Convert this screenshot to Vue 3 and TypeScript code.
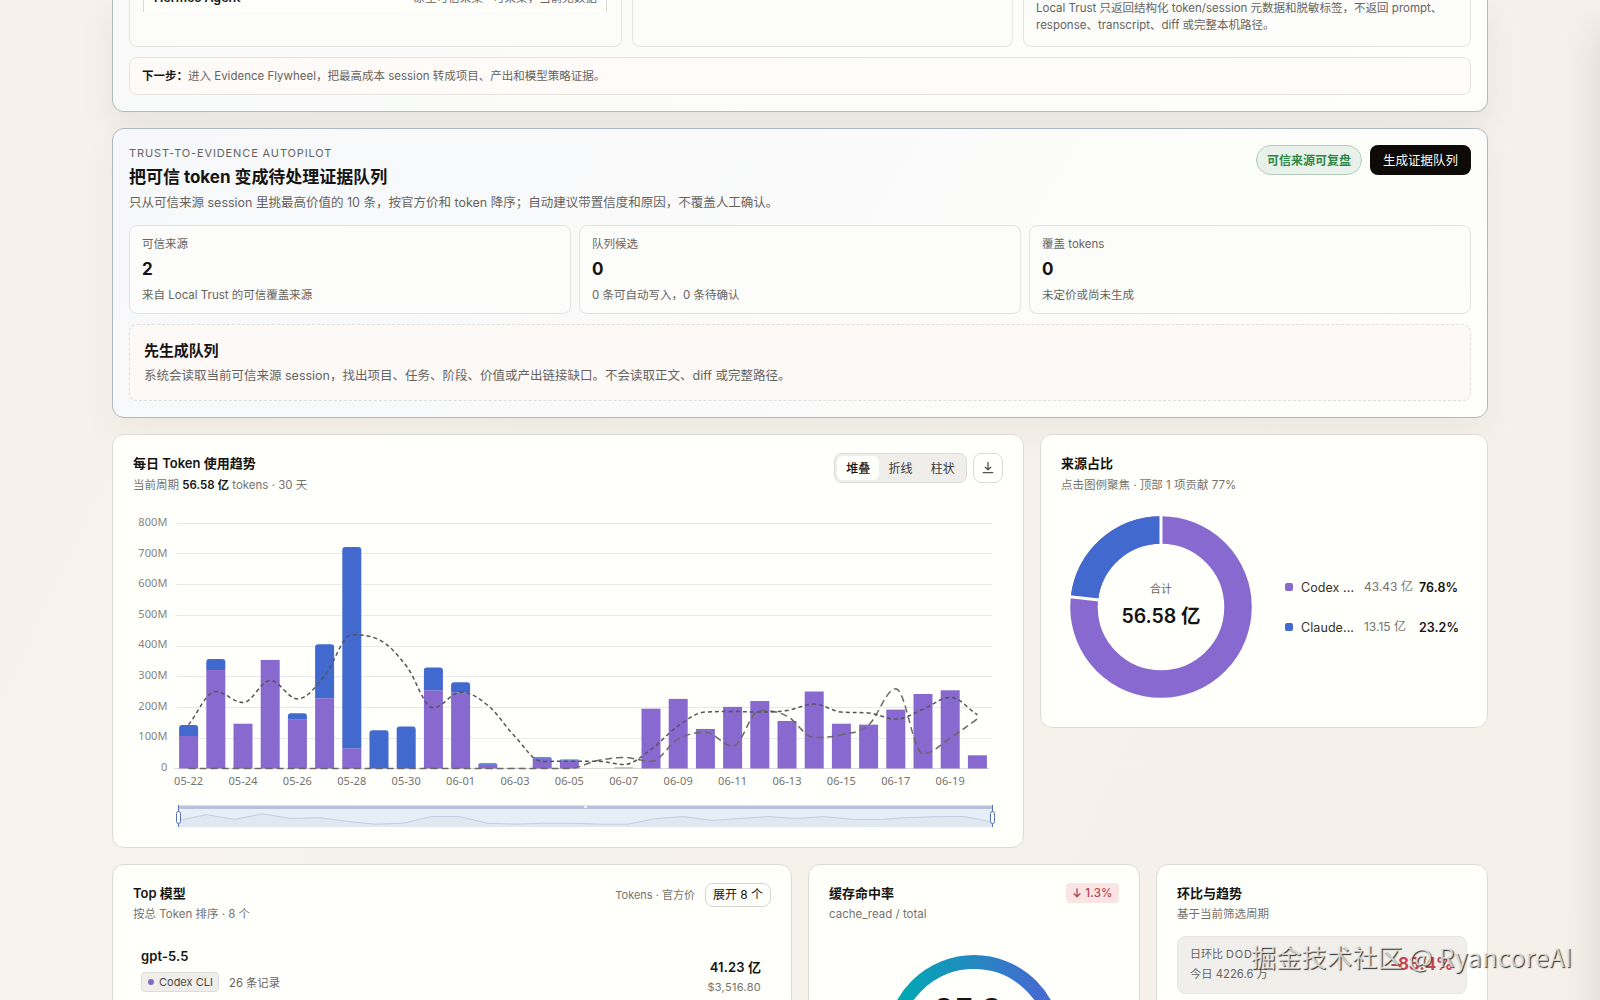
<script setup lang="ts">
interface Bar { codex: number; claude: number }

const X0 = 188.6
const STEP = 27.2
const ZERO = 768.5
const UNIT = 0.3067

const bars: Bar[] = [
  [106, 36], [321, 36], [146, 0], [354, 0], [161, 19], [229, 176], [66, 656], [0, 125],
  [0, 137], [255, 74], [248, 33], [12, 5], [2, 0], [32, 5], [25, 4], [0, 0],
  [4, 0], [195, 0], [227, 0], [129, 0], [201, 0], [220, 0], [155, 0], [251, 0],
  [146, 0], [143, 0], [192, 0], [243, 0], [255, 0], [43, 0],
].map(([codex, claude]) => ({ codex, claude }))

const average = [143, 251, 215, 287, 227, 302, 436, 420, 335, 198, 249, 206, 104, 23, 24, 24, 13, 62, 139, 184, 186, 184, 189, 210, 184, 181, 161, 193, 232, 175]
const previous = [0, 0, 0, 0, 0, 0, 0, 0, 0, 0, 0, 0, 0, 0, 0, 25, 36, 23, 96, 118, 73, 189, 171, 101, 110, 142, 260, 48, 99, 162]
const overview = [12, 6, 11, 5, 10, 9, 13, 16, 15, 8, 8, 15, 16, 15, 15, 16, 16, 10, 8, 12, 10, 8, 10, 8, 11, 11, 9, 8, 8, 14]

const cx = (i: number) => X0 + STEP * i
const cy = (v: number) => ZERO - v * UNIT

function smooth(ys: number[]): string {
  const n = ys.length
  const d = ys.slice(1).map((y, i) => (y - ys[i]) / STEP)
  const m = ys.map((_, i) => {
    if (i === 0) return d[0]
    if (i === n - 1) return d[n - 2]
    if (d[i - 1] * d[i] <= 0) return 0
    const limit = 2.6 * Math.min(Math.abs(d[i - 1]), Math.abs(d[i]))
    const mean = (d[i - 1] + d[i]) / 2
    return Math.sign(mean) * Math.min(Math.abs(mean), limit)
  })
  let path = `M${cx(0)} ${ys[0]}`
  const h = STEP * 0.36
  for (let i = 1; i < n; i++) {
    path += `C${cx(i - 1) + h} ${ys[i - 1] + m[i - 1] * h} ${cx(i) - h} ${ys[i] - m[i] * h} ${cx(i)} ${ys[i]}`
  }
  return path
}

function capPath(i: number, b: Bar): string {
  const x = cx(i) - 9.5
  const top = cy(b.codex + b.claude)
  const bottom = cy(b.codex)
  const r = Math.min(3, bottom - top)
  return `M${x} ${bottom}V${top + r}Q${x} ${top} ${x + r} ${top}H${x + 19 - r}Q${x + 19} ${top} ${x + 19} ${top + r}V${bottom}Z`
}

const averagePath = smooth(average.map(cy))
const previousPath = smooth(previous.map(cy))
const overviewLine = overview.map((v, i) => `${i ? 'L' : 'M'}${178.5 + i * 28.08} ${809 + v * 0.95}`).join('')

const ticks = [800, 700, 600, 500, 400, 300, 200, 100, 0]
const gridLines = [523.5, 553.5, 584.5, 615.5, 646.5, 676.5, 707.5, 738.5]
const days = ['05-22', '05-24', '05-26', '05-28', '05-30', '06-01', '06-03', '06-05', '06-07', '06-09', '06-11', '06-13', '06-15', '06-17', '06-19']

const metrics = [
  { label: '可信来源', value: '2', note: '来自 Local Trust 的可信覆盖来源' },
  { label: '队列候选', value: '0', note: '0 条可自动写入，0 条待确认' },
  { label: '覆盖 tokens', value: '0', note: '未定价或尚未生成' },
]
const legend = [
  { name: 'Codex ...', amount: '43.43 亿', share: '76.8%', kind: 'codex' },
  { name: 'Claude...', amount: '13.15 亿', share: '23.2%', kind: 'claude' },
]

const R = 77
const C = 2 * Math.PI * R
const cutAngle = 0.768 * 2 * Math.PI
const cut = { x: Math.sin(cutAngle), y: -Math.cos(cutAngle) }
</script>

<template>
  <div class="page">
    <main class="stack">
      <section class="card trust">
        <div class="trust-cols">
          <div class="panel sources">
            <div class="source-row"><b>Hermes Agent</b><span>原生可信采集 · 可采集，当前无数据</span></div>
          </div>
          <div class="panel"></div>
          <div class="panel note">
            <p>Local Trust 只返回结构化 token/session 元数据和脱敏标签，不返回 prompt、</p>
            <p>response、transcript、diff 或完整本机路径。</p>
          </div>
        </div>
        <div class="next"><b>下一步：</b><span>进入 Evidence Flywheel，把最高成本 session 转成项目、产出和模型策略证据。</span></div>
      </section>

      <section class="card autopilot">
        <header class="auto-head">
          <div>
            <div class="eyebrow">TRUST-TO-EVIDENCE AUTOPILOT</div>
            <h2>把可信 token 变成待处理证据队列</h2>
            <p class="lead">只从可信来源 session 里挑最高价值的 10 条，按官方价和 token 降序；自动建议带置信度和原因，不覆盖人工确认。</p>
          </div>
          <div class="auto-actions">
            <span class="pill">可信来源可复盘</span>
            <button class="primary">生成证据队列</button>
          </div>
        </header>
        <div class="metrics">
          <div v-for="m in metrics" :key="m.label" class="metric">
            <span class="m-label">{{ m.label }}</span>
            <strong>{{ m.value }}</strong>
            <span class="m-note">{{ m.note }}</span>
          </div>
        </div>
        <div class="empty">
          <h3>先生成队列</h3>
          <p>系统会读取当前可信来源 session，找出项目、任务、阶段、价值或产出链接缺口。不会读取正文、diff 或完整路径。</p>
        </div>
      </section>

      <div class="grid">
        <section class="card plain trend">
          <header class="head">
            <div>
              <h4>每日 Token 使用趋势</h4>
              <p class="sub">当前周期 <b>56.58 亿</b> tokens · 30 天</p>
            </div>
            <div class="tools">
              <div class="seg"><span class="on">堆叠</span><span>折线</span><span>柱状</span></div>
              <button class="dl" aria-label="download">
                <svg width="14" height="14" viewBox="0 0 14 14" fill="none" stroke="#55534e" stroke-width="1.300" stroke-linecap="round" stroke-linejoin="round"><path d="M7 1.500v7.200M4.300 6.200 7 8.900l2.700-2.700M2.300 11.700h9.400" /></svg>
              </button>
            </div>
          </header>
          <svg class="chart" width="870" height="330" viewBox="133 506 870 330">
            <g class="y-axis">
              <text v-for="(t, i) in ticks" :key="t" x="167.500" :y="526 + i * 30.6">{{ t ? t + 'M' : '0' }}</text>
            </g>
            <path v-for="y in gridLines" :key="y" :d="`M176.500 ${y}H992`" stroke="#e9e9ea" />
            <path d="M174.500 768.500H989" stroke="#dadadb" />
            <g v-for="(b, i) in bars" :key="i">
              <rect v-if="b.codex" :x="cx(i) - 9.5" :y="cy(b.codex)" width="19" :height="b.codex * UNIT" :fill="b.codex < 5 ? '#b5b3ae' : '#8769cf'" />
              <path v-if="b.claude" :d="capPath(i, b)" fill="#4169ce" />
            </g>
            <path :d="previousPath" class="line prev" />
            <path :d="averagePath" class="line avg" />
            <g class="x-axis">
              <text v-for="(d, i) in days" :key="d" :x="cx(i * 2)" y="785">{{ d }}</text>
            </g>
            <rect x="178.500" y="809" width="814.500" height="18" fill="#e7eef7" />
            <path :d="overviewLine + 'V827H178.500Z'" fill="#e0e8f1" />
            <path :d="overviewLine" fill="none" stroke="#c6cddd" />
            <rect x="178" y="805.500" width="815" height="3.500" fill="#b9c1da" />
            <path d="M584 807h3" stroke="#fff" stroke-width="1.500" />
            <path d="M178.500 805v22M992.500 805v22" stroke="#5473b5" />
            <rect x="176.500" y="811.500" width="4" height="12" rx="2" fill="#fff" stroke="#5473b5" />
            <rect x="990.500" y="811.500" width="4" height="12" rx="2" fill="#fff" stroke="#5473b5" />
          </svg>
        </section>

        <section class="card plain share">
          <h4>来源占比</h4>
          <p class="sub">点击图例聚焦 · 顶部 1 项贡献 77%</p>
          <div class="share-body">
            <div class="donut">
              <svg width="182" height="182" viewBox="-91 -91 182 182" fill="none">
                <g transform="rotate(-90)">
                  <circle :r="R" stroke="#8769cf" stroke-width="27.500" />
                  <circle :r="R" stroke="#4169ce" stroke-width="27.500" :stroke-dasharray="`${C * 0.232} ${C}`" :stroke-dashoffset="-C * 0.768" />
                </g>
                <path :d="`M0 -60V-92M${cut.x * 60} ${cut.y * 60}L${cut.x * 92} ${cut.y * 92}`" stroke="#fffffc" stroke-width="3" />
              </svg>
              <div class="donut-text"><span>合计</span><strong>56.58 亿</strong></div>
            </div>
            <ul class="legend">
              <li v-for="l in legend" :key="l.name">
                <i :class="l.kind"></i><span class="l-name">{{ l.name }}</span><span class="l-amt">{{ l.amount }}</span><b>{{ l.share }}</b>
              </li>
            </ul>
          </div>
        </section>

        <section class="card plain models">
          <header class="head">
            <div>
              <h4>Top 模型</h4>
              <p class="sub low">按总 Token 排序 · 8 个</p>
            </div>
            <div class="model-tools"><span>Tokens · 官方价</span><button>展开 8 个</button></div>
          </header>
          <div class="model">
            <div>
              <div class="model-name">gpt-5.5</div>
              <div class="model-meta"><span class="tag"><i></i>Codex CLI</span><span>26 条记录</span></div>
            </div>
            <div class="model-num"><b>41.23 亿</b><span>$3,516.80</span></div>
          </div>
        </section>

        <section class="card plain cache">
          <header class="head">
            <div>
              <h4>缓存命中率</h4>
              <p class="sub low">cache_read / total</p>
            </div>
            <span class="drop">
              <svg width="10" height="12" viewBox="0 0 10 12" fill="none" stroke="#b5434f" stroke-width="1.300" stroke-linecap="round" stroke-linejoin="round"><path d="M5 1.800v8M2 6.800 5 9.800l3-3" /></svg>1.3%
            </span>
          </header>
          <div class="gauge">
            <svg width="176" height="176" viewBox="0 0 176 176" fill="none">
              <defs><linearGradient id="ring" x1="0" y1="0" x2="1" y2="0"><stop offset="0.050" stop-color="#00a8b2" /><stop offset="0.900" stop-color="#446bd0" /></linearGradient></defs>
              <circle cx="88" cy="88" r="81" stroke="url(#ring)" stroke-width="14" />
            </svg>
            <div class="gauge-text">95.3<small>%</small></div>
          </div>
        </section>

        <section class="card plain ratio">
          <h4>环比与趋势</h4>
          <p class="sub low">基于当前筛选周期</p>
          <div class="dod">
            <div><div class="dod-label">日环比 <em>DOD</em></div><div class="dod-today">今日 4226.6 万</div></div>
            <strong>-83.4%</strong>
          </div>
        </section>
      </div>
    </main>
    <div class="drawer"></div>
    <div class="watermark">掘金技术社区 @ RyancoreAI</div>
  </div>
</template>

<style>
body { margin: 0; overflow: hidden; }
</style>

<style scoped>
* { box-sizing: border-box; }
.page {
  position: relative;
  width: 1600px;
  height: 1000px;
  overflow: hidden;
  background: linear-gradient(115deg, #f7f1ec 0%, #f5f2eb 50%, #f5f1ea 100%);
  font-family: Inter, "Noto Sans CJK SC", sans-serif;
  color: #151412;
}
h2, h3, h4, p, ul { margin: 0; padding: 0; }
p, h2, h3, h4, span, b, strong, button { white-space: nowrap; }
button { font-family: inherit; padding: 0; }
b { font-weight: 600; }
.stack { width: 1376px; margin: 0 auto; display: flex; flex-direction: column; gap: 16px; }
.card { border: 1px solid #b2bdb8; border-radius: 12px; }
.trust {
  height: 112px;
  border-top: 0;
  border-radius: 0 0 12px 12px;
  padding: 0 16px 16px;
  background: linear-gradient(100deg, #f8faf9, #fcfcfa 50%, #fefefc);
  box-shadow: 0 14px 34px rgba(40, 60, 50, 0.08);
}
.trust-cols { display: grid; grid-template-columns: 493px 381px 1fr; gap: 10px; height: 47px; }
.panel { border: 1px solid #e4e4e0; border-top: 0; border-radius: 0 0 8px 8px; background: #fcfcfa; }
.sources { padding: 0 14px 0 13px; overflow: hidden; }
.source-row {
  display: flex; justify-content: space-between; height: 12px; padding: 0 9px 0 10px;
  border: solid #d9d9d6; border-width: 0 1px; background: #fffffc; font-size: 12.5px; line-height: 20px;
}
.source-row b, .source-row span { margin-top: -12px; }
.source-row span { font-size: 11.5px; color: #66645f; letter-spacing: 0.06px; }
.note { padding: 0 12px; font-size: 11.5px; line-height: 17.3px; color: #66645f; }
.next {
  margin-top: 10px; height: 38px; padding: 0 12px; border: 1px solid #e6e2dd; border-radius: 8px;
  background: linear-gradient(90deg, #fefaf8, #fefcf8 50%); font-size: 11.5px; line-height: 37px; color: #66645f; display: flex;
}
.next b { color: #151412; width: 46px; font-weight: 700; }
.autopilot {
  height: 290px; padding: 16px; border-color: #aeb7c3;
  background: linear-gradient(120deg, #f6f8fb, #fafafa 45%, #fefefc);
  box-shadow: 0 14px 34px rgba(50, 50, 60, 0.05);
}
.auto-head { display: flex; justify-content: space-between; height: 80px; }
.eyebrow { font-size: 11px; line-height: 15px; margin-top: 1px; letter-spacing: 0.87px; color: #66645f; }
h2 { font-size: 17px; line-height: 24px; margin-top: 4px; font-weight: 700; letter-spacing: -0.03px; }
.lead { margin-top: 5px; font-size: 12.5px; line-height: 18px; color: #66645f; }
.auto-actions { display: flex; gap: 8px; height: 30px; }
.pill {
  width: 106px; border: 1px solid #b3cbb9; border-radius: 15px; background: #e9f1eb; color: #2f8743;
  font-size: 12px; font-weight: 600; line-height: 29px; text-align: center;
}
.primary { width: 101px; border: 0; border-radius: 8px; background: #0d0a08; color: #fdfcf8; font-size: 12.5px; font-weight: 400; line-height: 31px; }
.metrics { display: grid; grid-template-columns: repeat(3, 1fr); gap: 8px; }
.metric { height: 89px; border: 1px solid #e3e4e1; border-radius: 8px; background: #fcfcfa; padding: 10px 12px; display: flex; flex-direction: column; }
.m-label { font-size: 11.5px; line-height: 17px; color: #66645f; }
.metric strong { font-size: 17px; line-height: 22px; margin-top: 5px; font-weight: 700; }
.m-note { font-size: 11.5px; line-height: 17px; margin-top: 7px; color: #66645f; }
.empty { margin-top: 10px; height: 77px; border: 1px dashed #dfdfdb; border-radius: 8px; background: #fdf9f7; padding: 15px 14px; }
h3 { font-size: 15px; line-height: 22px; font-weight: 600; letter-spacing: -0.1px; }
.empty p { font-size: 12.5px; line-height: 18px; margin-top: 5px; color: #66645f; }
.grid { display: grid; grid-template-columns: repeat(12, 1fr); column-gap: 16px; row-gap: 16px; align-items: start; }
.plain { border-color: #dcdbd4; background: #fffffc; padding: 18px 20px; }
.trend { grid-column: span 8; height: 414px; }
.share { grid-column: span 4; height: 294px; }
.models { grid-column: span 6; height: 260px; }
.cache, .ratio { grid-column: span 3; height: 260px; }
.head { display: flex; justify-content: space-between; }
h4 { font-size: 13px; line-height: 20px; font-weight: 600; }
.sub { font-size: 11.5px; line-height: 18px; margin-top: 3px; color: #75736e; }
.sub b { color: #151412; }
.sub.low { margin-top: 2px; }
.tools { display: flex; gap: 6px; height: 30px; }
.seg { width: 133px; border: 1px solid #dcdbd6; border-radius: 8px; background: #efeeea; padding: 2px; display: flex; }
.seg span { flex: 1; text-align: center; font-size: 12px; line-height: 26px; height: 24px; border-radius: 6px; color: #3c3a36; }
.seg .on { background: #fffffc; color: #151412; font-weight: 500; }
.dl { width: 30px; height: 30px; border: 1px solid #dcdbd6; border-radius: 8px; background: #fffffc; display: flex; align-items: center; justify-content: center; }
.chart { display: block; margin: 12px 0 0; }
.y-axis text, .x-axis text { font-family: "Noto Sans", sans-serif; font-size: 11px; fill: #85837e; }
.y-axis text { text-anchor: end; letter-spacing: 0.1px; }
.x-axis text { text-anchor: middle; fill: #75736e; letter-spacing: 0.1px; }
.line { fill: none; stroke: #57555a; stroke-width: 1.5; }
.avg { stroke-dasharray: 4 3; }
.prev { stroke: #6c6865; stroke-dasharray: 7 4; }
.share-body { display: flex; align-items: center; margin: 22px 8px 0 9px; justify-content: space-between; }
.donut { display: grid; width: 182px; height: 182px; }
.donut > * { grid-area: 1 / 1; }
.donut-text { display: flex; flex-direction: column; align-items: center; justify-content: center; }
.donut-text span { font-size: 11px; line-height: 16px; color: #66645f; margin-top: -4px; }
.donut-text strong { font-size: 19.5px; line-height: 26px; margin-top: 6px; font-weight: 600; letter-spacing: -0.08px; }
.legend { list-style: none; width: 174px; display: flex; flex-direction: column; gap: 20px; }
.legend li { display: flex; align-items: center; height: 20px; font-size: 12.5px; }
.legend i { width: 8px; height: 8px; border-radius: 2px; margin-right: 8px; }
.legend .codex { background: #8769cf; }
.legend .claude { background: #4169ce; }
.l-name { width: 63px; color: #33312d; letter-spacing: 0.08px; }
.l-amt { font-size: 12px; color: #75736e; width: 55px; margin-top: -3px; }
.legend b { font-size: 12.5px; letter-spacing: 0.06px; }
.model-tools { display: flex; align-items: center; gap: 10px; height: 24px; font-size: 11.5px; color: #75736e; }
.model-tools > span { margin-top: -3px; font-size: 11px; }
.model-tools button { width: 66px; height: 24px; border: 1px solid #d6d5cf; border-radius: 8px; background: #fffffc; font-size: 12px; line-height: 20px; font-weight: 400; color: #151412; }
.model { display: flex; justify-content: space-between; padding: 24px 10px 0 8px; }
.model-name { font-size: 13px; font-weight: 600; line-height: 18px; letter-spacing: 0.1px; }
.model-meta { display: flex; align-items: center; gap: 10px; margin-top: 7px; font-size: 11.3px; color: #66645f; }
.tag { display: flex; align-items: center; width: 78px; height: 20px; border: 1px solid #dedcd7; border-radius: 4px; background: #f0eeea; font-size: 11px; color: #4b4945; padding-left: 6px; }
.tag i { width: 6px; height: 6px; border-radius: 50%; background: #7f6fc0; margin-right: 5px; }
.model-num { display: flex; flex-direction: column; align-items: flex-end; margin-top: 10px; }
.model-num b { font-size: 13px; line-height: 20px; letter-spacing: 0.1px; }
.model-num span { font-size: 11px; line-height: 20px; color: #75736e; letter-spacing: 0.3px; }
.drop { display: flex; align-items: center; justify-content: center; gap: 3px; width: 53px; height: 20px; border-radius: 4px; background: #fae5e4; font-size: 11.5px; font-weight: 500; color: #b5434f; letter-spacing: 0.2px; }
.gauge { display: grid; width: 176px; height: 176px; margin: 32px auto 0; }
.gauge > * { grid-area: 1 / 1; }
.gauge-text { font-size: 32px; font-weight: 700; text-align: center; padding-top: 36px; line-height: 40px; letter-spacing: -1px; }
.gauge-text small { font-size: 14px; }
.dod { margin-top: 13px; height: 58px; border: 1px solid #e8e6e2; border-radius: 8px; background: #f0efec; padding: 6px 13px 8px 12px; display: flex; justify-content: space-between; align-items: center; }
.dod-label { font-size: 11px; line-height: 20px; color: #66645f; }
.dod-label em { font-style: normal; letter-spacing: 0.8px; }
.dod-today { font-size: 11.3px; line-height: 20px; color: #66645f; }
.dod strong { font-size: 17px; font-weight: 700; color: #c6444b; letter-spacing: -0.2px; }
.drawer { position: absolute; left: 1600px; top: 28px; width: 300px; height: 1100px; box-shadow: 0 0 40px rgba(30, 25, 40, 0.13); }
.watermark { position: absolute; left: 1251px; top: 938px; font-size: 25px; line-height: 36px; letter-spacing: 0.3px; white-space: nowrap; font-family: "Noto Sans CJK SC", sans-serif; color: rgba(244, 243, 240, 0.8); text-shadow: 1px 1px 1px #333; }
</style>
